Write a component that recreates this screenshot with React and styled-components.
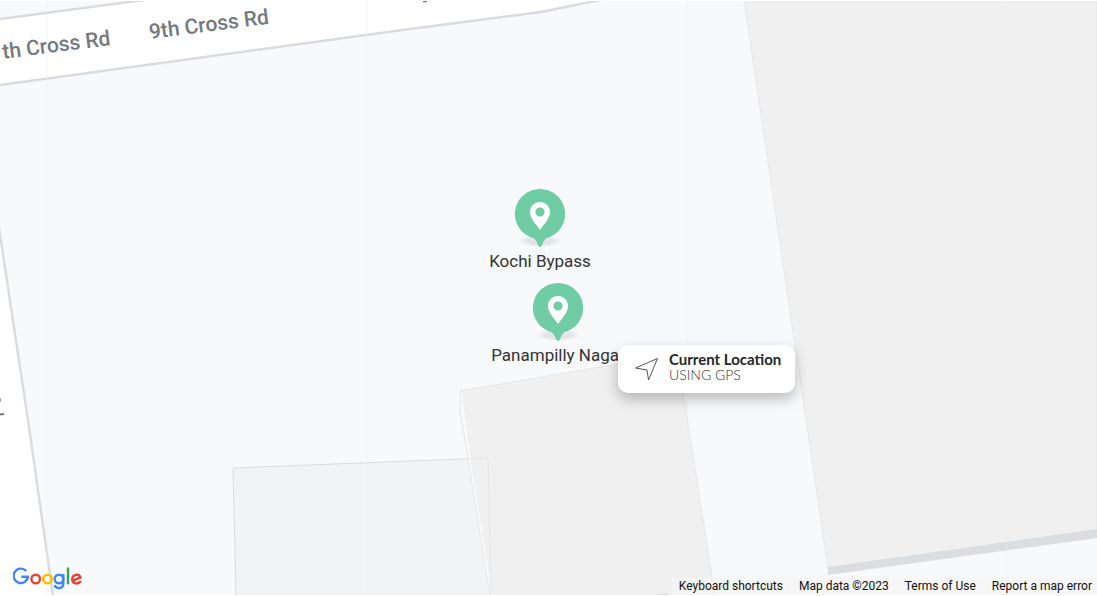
import React from "react";
import styled, { createGlobalStyle, css } from "styled-components";

const GlobalStyle = createGlobalStyle`
  *, *::before, *::after { box-sizing: border-box; }
  body { margin: 0; background: #fff; font-family: Roboto, "Liberation Sans", sans-serif; }
`;

const MapView = styled.main`
  position: relative;
  display: flex;
  flex-direction: column;
  justify-content: flex-end;
  width: 100%;
  height: 100vh;
  overflow: hidden;
  background: #f8f9fb;
`;

const Tiles = styled.svg`
  position: absolute;
  inset: 0;
  width: 100%;
  height: 100%;
`;

const StreetName = styled.text`
  font-family: Roboto, "Liberation Sans", sans-serif;
  font-size: 21px;
  font-weight: 500;
  fill: #73797e;
`;

const Pin = styled.button`
  position: absolute;
  left: ${(p) => p.$x}px;
  top: ${(p) => p.$y}px;
  display: flex;
  flex-direction: column;
  align-items: center;
  width: 160px;
  margin-left: -80px;
  padding: 0;
  border: 0;
  background: none;
  color: #333;
  font-family: inherit;
  font-size: 17px;
  font-weight: 400;
  line-height: 24px;
  white-space: nowrap;
  cursor: pointer;
`;

const PinIcon = styled.svg`
  display: block;
  width: 60px;
  height: 60px;
`;

const LocationCard = styled.button`
  position: absolute;
  left: 618px;
  top: 345px;
  display: flex;
  align-items: center;
  gap: 10px;
  height: 48px;
  padding: 0 14px 0 16px;
  border: 0;
  border-radius: 10px;
  background: #fff;
  box-shadow: 0 6px 14px rgba(0, 0, 0, 0.26);
  font-family: Lato, "Liberation Sans", sans-serif;
  text-align: left;
  cursor: pointer;
`;

const CardText = styled.span`
  display: flex;
  flex-direction: column;
  line-height: 16px;
  padding-bottom: 4px;
`;

const CardTitle = styled.strong`
  font-size: 15px;
  font-weight: 700;
  color: #23272b;
`;

const CardHint = styled.span`
  font-size: 14px;
  font-weight: 300;
  color: #333;
`;

const MapFooter = styled.footer`
  position: relative;
  display: flex;
  align-items: flex-end;
  justify-content: space-between;
  border-bottom: 1px solid #fff;
`;

const LogoLink = styled.a`
  display: block;
  padding: 0 0 5px 13px;
  svg { display: block; }
`;

const Credits = styled.div`
  display: flex;
  gap: 1px;
`;

const creditItem = css`
  display: block;
  height: 17px;
  padding: 0 8px 0 7px;
  border: 0;
  background: rgba(245, 245, 245, 0.8);
  color: #111;
  font-family: Roboto, "Liberation Sans", sans-serif;
  font-size: 12px;
  font-weight: 400;
  line-height: 17px;
  text-decoration: none;
  white-space: nowrap;

  &:last-child { padding-right: 5px; }
`;
const CreditButton = styled.button`${creditItem}`;
const CreditText = styled.span`${creditItem}`;
const CreditLink = styled.a`${creditItem}`;

const places = [
  { name: "Kochi Bypass", x: 540, y: 189 },
  { name: "Panampilly Nagar", x: 558, y: 283 },
];

function MapTiles() {
  return (
    <Tiles viewBox="0 0 1097 596" preserveAspectRatio="xMidYMid slice">
      <rect width="1097" height="596" fill="#f8f9fb" />
      <path d="M0 19 L144 0 H600 L541 12 L410 29 L0 85Z" fill="#fff" />
      <g fill="none" stroke="#dadbdf" strokeWidth="2.4">
        <path d="M0 19 L144 0" />
        <path d="M0 85 L410 29 L541 12 L600 0" />
      </g>
      <path d="M-1 228 L28 420 L53 596 H-1Z" fill="#fff" />
      <path d="M-1 228 L28 420 L53 596" fill="none" stroke="#dadbdf" strokeWidth="2.4" />
      <path d="M744 0 H1097 V530 L828 568Z" fill="#f0f0f0" stroke="#e6e7e7" strokeWidth="1" />
      <path d="M828 567 L1097 529 V538 L828 575Z" fill="#dbdee1" />
      <path d="M233 468 L488 458 L491 596 H236Z" fill="#f1f3f5" stroke="#dadbdf" strokeWidth="1" />
      <path d="M460 391 L677 354 L715 596 H493 L470 458Z" fill="#f0f0f0" />
      <path d="M460 391 L677 354 L715 596" fill="none" stroke="#e5e6e6" />
      <path d="M461 394 L469 458 L491 596" fill="none" stroke="#f9fafb" strokeWidth="2" />
      <path d="M460 391 V411 L468 458 L490 596" fill="none" stroke="#e5e6e6" strokeWidth="1" />
      <path d="M471 459 L488 458 L491 596" fill="none" stroke="#e7e7e7" strokeWidth="1" />
      <path d="M650 596 L668 593 V596Z" fill="#dbdee1" />
      <path d="M47 0V596M367 0V596M687 0V596M1007 0V596" stroke="#eeeff0" strokeOpacity="0.6" />
      <StreetName transform="translate(150 39) rotate(-7.3)">9th Cross Rd</StreetName>
      <StreetName textAnchor="end" transform="translate(111 45) rotate(-7.3)">th Cross Rd</StreetName>
      <path d="M423 1.500 H427" stroke="#73797e" strokeWidth="1.500" />
      <path d="M0 414.500 L4 414" stroke="#73797e" strokeWidth="2" />
      <path d="M0 398 V402" stroke="#a3a7aa" strokeWidth="2" />
      <path d="M0 0.500 H1097" stroke="#fff" />
    </Tiles>
  );
}

function PlacePin({ name, x, y }) {
  const shadowId = `shadow-${x}`;
  return (
    <Pin type="button" $x={x} $y={y}>
      <PinIcon viewBox="0 0 60 60" aria-hidden="true">
        <defs>
          <radialGradient id={shadowId}>
            <stop offset="0.6" stopColor="#e3e5e7" />
            <stop offset="1" stopColor="#e3e5e7" stopOpacity="0" />
          </radialGradient>
        </defs>
        <ellipse cx="30" cy="52" rx="22" ry="6" fill={`url(#${shadowId})`} />
        <path d="M30 0a25 25 0 0 1 6 49.300Q34 51 32 56Q30 60 28 56Q26 51 24 49.300A25 25 0 0 1 30 0Z" fill="#70cca4" />
        <path d="M30 13c-5.700 0-10 4.400-10 10 0 6.500 6 12 10 18 4-6 10-11.500 10-18 0-5.600-4.300-10-10-10Zm0 5.400a4.600 4.600 0 1 1 0 9.200 4.600 4.600 0 0 1 0-9.200Z" fill="#fff" fillRule="evenodd" />
      </PinIcon>
      <span>{name}</span>
    </Pin>
  );
}

function GoogleLogo() {
  return (
    <svg width="70" height="24" viewBox="0 0 70 24" fill="none" strokeWidth="2.400" role="img" aria-label="Google">
      <path d="M13.200 5A7.200 7.200 0 1 0 15 10.700H8.300" stroke="#4285f4" />
      <circle cx="22.700" cy="13" r="4.300" stroke="#ea4335" />
      <circle cx="34.500" cy="13" r="4.300" stroke="#fbbc05" />
      <path d="M50.300 8V17.500c0 5.800-7.200 5.800-8.600 1.700" stroke="#4285f4" />
      <circle cx="46" cy="13" r="4.300" stroke="#4285f4" />
      <path d="M55 1.500V18.300" stroke="#34a853" />
      <path d="M59.500 14.800L67.500 11.400C65.800 7.200 59.200 8.400 59.200 13.200c0 4.800 6.300 5.700 8.700 1.900" stroke="#ea4335" />
    </svg>
  );
}

export default function App() {
  return (
    <>
      <GlobalStyle />
      <MapView>
        <MapTiles />
        {places.map((place) => (
          <PlacePin key={place.name} {...place} />
        ))}
        <LocationCard type="button">
          <svg width="25" height="24" viewBox="0 0 25 24" fill="none" stroke="#555" strokeLinejoin="round" aria-hidden="true">
            <path d="M23.500 1.500 L1.500 11 L13 13 L14.500 23Z" />
          </svg>
          <CardText>
            <CardTitle>Current Location</CardTitle>
            <CardHint>USING GPS</CardHint>
          </CardText>
        </LocationCard>
        <MapFooter>
          <LogoLink href="#google"><GoogleLogo /></LogoLink>
          <Credits>
            <CreditButton type="button">Keyboard shortcuts</CreditButton>
            <CreditText>Map data ©2023</CreditText>
            <CreditLink href="#terms">Terms of Use</CreditLink>
            <CreditLink href="#report">Report a map error</CreditLink>
          </Credits>
        </MapFooter>
      </MapView>
    </>
  );
}
